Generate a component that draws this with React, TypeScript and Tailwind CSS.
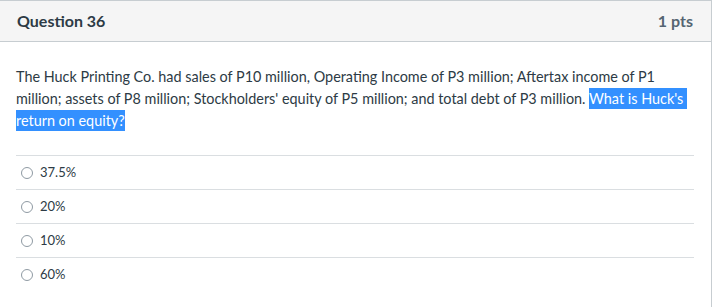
import React from "react";

const options = ["37.5%", "20%", "10%", "60%"];

export default function App() {
  return (
    <div className="w-[713px] h-[307px] bg-white overflow-hidden font-['Lato','Open_Sans',sans-serif] text-[#2d3b45]">
      <div className="w-[712px] border-t border-r border-[#c7cdd1] h-full">
        <div className="h-[41px] bg-[#f5f5f5] border-b border-[#c7cdd1] flex items-center justify-between pl-[17px] pr-[18px]">
          <h2 className="text-[16px] font-bold text-[#2d3b45]">Question 36</h2>
          <div className="text-[16px] font-bold text-[#556572]">1 pts</div>
        </div>
        <div className="pl-[16px] pr-[12px] pt-[24px]">
          <p className="text-[14.4px] leading-[22px] text-[#2d3b45] whitespace-nowrap">
            The Huck Printing Co. had sales of P10 million, Operating Income of P3 million; Aftertax income of P1
            <br />
            million; assets of P8 million; Stockholders' equity of P5 million; and total debt of P3 million.{" "}
            <span className="bg-[#3390ff] text-white py-[2px] box-decoration-clone">
              What is Huck's&nbsp;
              <br />
              return on equity?
            </span>
          </p>
          <div className="mt-[23px] w-[678px]">
            {options.map((o) => (
              <label
                key={o}
                className="flex items-center gap-[7px] h-[34px] border-t border-[#dadee1] pl-[5px]"
              >
                <span className="w-[12px] h-[12px] rounded-full border border-[#8f9aa3] bg-white" />
                <span className="text-[13px] text-[#2d3b45]">{o}</span>
              </label>
            ))}
          </div>
        </div>
      </div>
    </div>
  );
}
